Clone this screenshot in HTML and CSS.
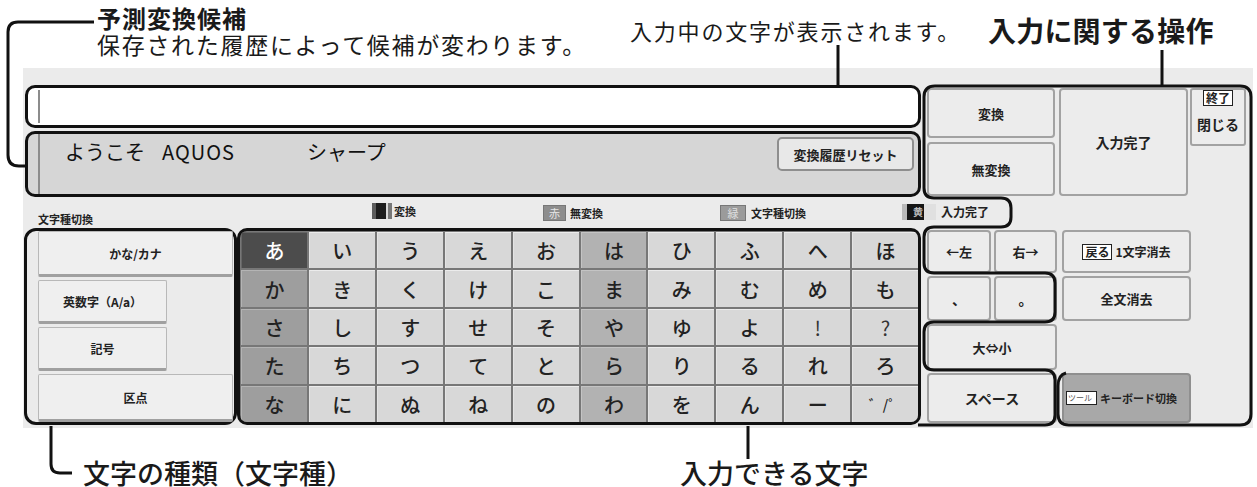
FILE: index.html
```html
<!DOCTYPE html>
<html lang="ja">
<head>
<meta charset="utf-8">
<title>ソフトウェアキーボード</title>
<link rel="stylesheet" href="styles.css">
</head>
<body>
<div class="page">
  <header class="head">
    <div class="note-main">
      <div class="note-title">予測変換候補</div>
      <div class="note-sub">保存された履歴によって候補が変わります。</div>
    </div>
    <div class="note-input">入力中の文字が表示されます。</div>
    <div class="note-ops">入力に関する操作</div>
  </header>

  <main class="panel">
    <section class="edit">
      <div class="input-box"><span class="caret"></span></div>
      <div class="cand-box">
        <span class="caret"></span>
        <div class="cands">
          <span class="cand c1">ようこそ</span>
          <span class="cand c2">AQUOS</span>
          <span class="cand c3">シャープ</span>
        </div>
        <button class="reset">変換履歴リセット</button>
      </div>
    </section>

    <section class="ops-top">
      <div class="conv-col">
        <div class="okey k-conv">変換</div>
        <div class="okey k-noconv">無変換</div>
      </div>
      <div class="okey k-done">入力完了</div>
      <div class="okey k-close"><span class="tag">終了</span><span>閉じる</span></div>
    </section>

    <section class="legend">
      <span class="lg-label">文字種切換</span>
      <span class="lg-item i1"><span class="sw sw-blue"></span>変換</span>
      <span class="lg-item i2"><span class="sw sw-red">赤</span>無変換</span>
      <span class="lg-item i3"><span class="sw sw-green">緑</span>文字種切換</span>
      <span class="lg-item i4"><span class="sw sw-yellow"><b>黄</b></span>入力完了</span>
    </section>

    <section class="lower">
      <div class="mode-box">
        <div class="mkey m-wide">かな/カナ</div>
        <div class="mkey m-short">英数字（A/a）</div>
        <div class="mkey m-short">記号</div>
        <div class="mkey m-wide m-last">区点</div>
      </div>
      <div class="keys">
        <div class="key k-a">あ</div><div class="key">い</div><div class="key">う</div><div class="key">え</div><div class="key">お</div><div class="key k-mid">は</div><div class="key">ひ</div><div class="key">ふ</div><div class="key">へ</div><div class="key">ほ</div>
        <div class="key k-dk">か</div><div class="key">き</div><div class="key">く</div><div class="key">け</div><div class="key">こ</div><div class="key k-mid">ま</div><div class="key">み</div><div class="key">む</div><div class="key">め</div><div class="key">も</div>
        <div class="key k-dk">さ</div><div class="key">し</div><div class="key">す</div><div class="key">せ</div><div class="key">そ</div><div class="key k-mid">や</div><div class="key">ゆ</div><div class="key">よ</div><div class="key k-sym">!</div><div class="key k-sym">?</div>
        <div class="key k-dk">た</div><div class="key">ち</div><div class="key">つ</div><div class="key">て</div><div class="key">と</div><div class="key k-mid">ら</div><div class="key">り</div><div class="key">る</div><div class="key">れ</div><div class="key">ろ</div>
        <div class="key k-dk">な</div><div class="key">に</div><div class="key">ぬ</div><div class="key">ね</div><div class="key">の</div><div class="key k-mid">わ</div><div class="key">を</div><div class="key">ん</div><div class="key">ー</div><div class="key k-dak">゛/゜</div>
      </div>
    </section>

    <section class="ops-low">
      <div class="okey">←左</div>
      <div class="okey">右→</div>
      <div class="okey k-bs"><span class="tag">戻る</span>1文字消去</div>
      <div class="okey k-punc">、</div>
      <div class="okey k-punc">。</div>
      <div class="okey">全文消去</div>
      <div class="okey k-size">大⇔小</div>
      <div class="okey k-space">スペース</div>
      <div class="okey k-kb"><span class="tag tag-s">ツール</span>キーボード切換</div>
    </section>
  </main>

  <footer class="foot">
    <div class="note-kind">文字の種類（文字種）</div>
    <div class="note-chars">入力できる文字</div>
  </footer>

  <svg class="callouts" width="1257" height="487" viewBox="0 0 1257 487" aria-hidden="true">
    <g fill="none" stroke="#111" stroke-width="3" stroke-linejoin="round">
      <path d="M94 22 L18 22 Q8 22 8 32 L8 155 Q8 166 19 166 L26 166"/>
      <path d="M838 45 L838 86"/>
      <path d="M1162 50 L1162 86"/>
      <path d="M51 426 L51 464 Q51 473 60 473 L72 473"/>
      <path d="M748 426 L748 459"/>
      <path d="M924 188 L924 97 Q924 86 935 86 L1240 86 Q1251 86 1251 97 L1251 414 Q1251 425 1240 425 L1069 425 Q1058 425 1058 414 L1058 386 Q1058 375 1066 373"/>
      <path d="M924 188 Q924 198 934 198 L1001 198 Q1011 198 1011 208 L1011 217 Q1011 227 1001 227 L934 227 Q924 227 924 237 L924 263 Q924 273 934 273 L1045 273 Q1055 273 1055 283 L1055 312 Q1055 322 1045 322 L934 322 Q924 322 924 332 L924 360 Q924 370 934 370 L1045 370 Q1055 370 1055 380 L1055 415 Q1055 425 1045 425 L918 425"/>
    </g>
  </svg>
</div>
</body>
</html>
```

FILE: styles.css
```css
* { box-sizing: border-box; }
html, body { margin: 0; padding: 0; background: #fff; }
body {
  font-family: "Noto Sans CJK JP", "Noto Sans", "Liberation Sans", sans-serif;
  color: #1a1a1a;
}
.page { position: relative; width: 1257px; height: 487px; overflow: hidden; }

/* header annotations */
.head {
  height: 68px;
  display: grid;
  grid-template-columns: 97px 533px 358px 1fr;
}
.note-main { grid-column: 2; padding-top: 5px; }
.note-title { font-size: 24px; line-height: 26px; font-weight: 700; letter-spacing: 1px; }
.note-sub { font-size: 23px; line-height: 27px; font-weight: 400; letter-spacing: 1.7px; }
.note-input { grid-column: 3; font-size: 22px; line-height: 26px; padding-top: 17px; letter-spacing: 1.8px; }
.note-ops { grid-column: 4; font-size: 28px; line-height: 32px; padding-top: 14px; font-weight: 700; letter-spacing: 0.2px; }

/* panel */
.panel {
  margin-left: 23px;
  width: 1230px;
  height: 360px;
  background: #ebebeb;
  padding: 17px 0 3px 0;
  display: grid;
  grid-template-columns: 898px 332px;
  grid-template-rows: 112px 31px 1fr;
}

.edit { grid-column: 1; grid-row: 1; padding-left: 2px; display: flex; flex-direction: column; gap: 3px; }
.input-box {
  height: 43px;
  background: #fff;
  border: 3px solid #111;
  border-radius: 10px;
  padding: 2px 0 2px 10px;
  display: flex;
}
.caret { width: 2px; background: #8c8c8c; align-self: stretch; flex: none; }
.cand-box {
  height: 66px;
  background: #d6d6d6;
  border: 3px solid #111;
  border-radius: 10px;
  padding: 0 4px 0 10px;
  display: flex;
  align-items: flex-start;
}
.cands { display: flex; padding-top: 5px; font-size: 20px; line-height: 26px; color: #111; }
.cand.c1 { margin-left: 25px; }
.cand.c2 { margin-left: 17px; letter-spacing: 1px; }
.cand.c3 { margin-left: 72px; }
.reset {
  margin-left: auto;
  margin-top: 3px;
  width: 137px;
  height: 34px;
  font-family: inherit;
  font-size: 13px;
  font-weight: 700;
  color: #222;
  background: #e8e8e8;
  border: 2px solid #8e8e8e;
  border-radius: 5px;
  padding: 0;
}

/* operation keys */
.okey {
  background: #ececec;
  border: 2px solid #a2a2a2;
  border-radius: 4px;
  display: flex;
  align-items: center;
  justify-content: center;
  font-size: 13px;
  font-weight: 700;
  color: #222;
}
.ops-top { grid-column: 2; grid-row: 1; display: flex; padding: 3px 0 1px 6px; gap: 4px; }
.conv-col { width: 128px; display: flex; flex-direction: column; gap: 4px; }
.k-conv { height: 50px; }
.k-noconv { flex: 1; }
.k-done { width: 129px; font-size: 14px; }
.k-close {
  width: 56px; height: 58px; margin-left: -2px;
  flex-direction: column; justify-content: flex-start; gap: 8px; padding-top: 0;
  font-size: 14px; border-radius: 3px;
}
.tag {
  display: inline-block;
  background: #fff;
  border: 1.5px solid #222;
  font-size: 12px;
  line-height: 14px;
  padding: 0 2px;
  font-weight: 700;
}

/* legend */
.legend {
  grid-column: 1 / 3; grid-row: 2;
  display: grid;
  grid-template-columns: 15px 334px 171px 177px 182px 1fr;
  align-items: center;
  font-size: 11px; font-weight: 700; color: #222;
}
.lg-label { grid-column: 2; margin-top: 12px; }
.lg-item { display: flex; align-items: center; gap: 2px; }
.i1 { grid-column: 3; margin-top: -4px; }
.i2 { grid-column: 4; margin-top: 1px; }
.i3 { grid-column: 5; }
.i4 { grid-column: 6; font-size: 12px; margin-top: -2px; gap: 5px; }
.sw { display: inline-flex; align-items: center; justify-content: center; height: 16px; font-size: 11px; font-weight: 400; }
.sw-blue { width: 20px; background: linear-gradient(90deg, #5c5c5c 0 20%, #1c1c1c 20% 68%, #d8d8d8 68% 78%, #777 78%); }
.sw-red { width: 23px; background: #8d8d8d; color: #e6e6e6; border: 1px solid #777; margin-right: 2px; }
.sw-green { width: 26px; background: #9b9b9b; color: #e0e0e0; border: 1px solid #777; margin-right: 3px; }
.sw-yellow { width: 34px; background: linear-gradient(90deg, #b9b9b9 0 15%, #151515 15% 65%, #e0e0e0 65%); color: #bbb; }
.sw-yellow b { font-size: 10px; margin-left: -2px; }

/* lower: modes and keys */
.lower { grid-column: 1; grid-row: 3; display: flex; padding-left: 1px; }
.mode-box {
  width: 213px;
  height: 197px;
  border: 3px solid #111;
  border-radius: 12px;
  background: #ebebeb;
  padding: 0 1px 0 11px;
  display: flex;
  flex-direction: column;
  gap: 3px;
}
.mkey {
  background: #efefef;
  border: 1px solid #b8b8b8;
  border-bottom: 3px solid #a0a0a0;
  border-radius: 2px;
  display: flex; align-items: center; justify-content: center;
  font-size: 12px; font-weight: 700; color: #222;
}
.m-wide { height: 46px; }
.m-short { height: 44px; width: 129px; }
.m-last { flex: 1; }

.keys {
  width: 684px;
  height: 197px;
  border: 3px solid #111;
  border-radius: 10px;
  overflow: hidden;
  background: #777;
  display: grid;
  grid-template-columns: repeat(10, 1fr);
  grid-template-rows: repeat(5, 1fr);
  gap: 2px;
  padding: 1px 0 0 1px;
}
.key {
  background: #d8d8d8;
  border-top: 1px solid #ececec;
  border-left: 1px solid #e4e4e4;
  display: flex; align-items: center; justify-content: center;
  font-size: 20px; font-weight: 500; color: #222;
}
.key.k-a { background: #4c4c4c; color: #fff; border-color: #666; }
.key.k-dk { background: #9e9e9e; border-color: #b4b4b4; }
.key.k-mid { background: #b2b2b2; border-color: #c4c4c4; }
.key.k-sym { font-size: 20px; color: #333; font-weight: 400; }
.key.k-dak { font-size: 14px; }

.ops-low {
  grid-column: 2; grid-row: 3;
  display: grid;
  grid-template-columns: 64px 63px 131px;
  grid-template-rows: 43px 45px 46px 1fr;
  gap: 3px 3px;
  padding: 2px 0 2px 6px;
}
.ops-low .okey:nth-child(3n) { margin-left: 2px; }
.k-bs { gap: 3px; font-size: 12px; }
.k-bs .tag { font-size: 12px; }
.k-punc { font-size: 14px; }
.k-size { grid-column: 1 / 3; }
.k-space { grid-column: 1 / 3; font-size: 14px; }
.k-kb { background: #a8a8a8; border-color: #8f8f8f; font-size: 11px; gap: 3px; justify-content: flex-start; padding-left: 2px; }
.tag-s { font-size: 8px; line-height: 12px; padding: 0 4px 0 1px; border-width: 1px; font-weight: 400; color: #555; }

/* footer annotations */
.foot {
  display: grid;
  grid-template-columns: 680px 1fr;
  padding-top: 29px;
}
.note-kind { grid-column: 1; padding-left: 83px; font-size: 27px; line-height: 32px; font-weight: 500; }
.note-chars { grid-column: 2; font-size: 27px; line-height: 32px; font-weight: 500; }

.callouts { position: absolute; left: 0; top: 0; pointer-events: none; }
```
